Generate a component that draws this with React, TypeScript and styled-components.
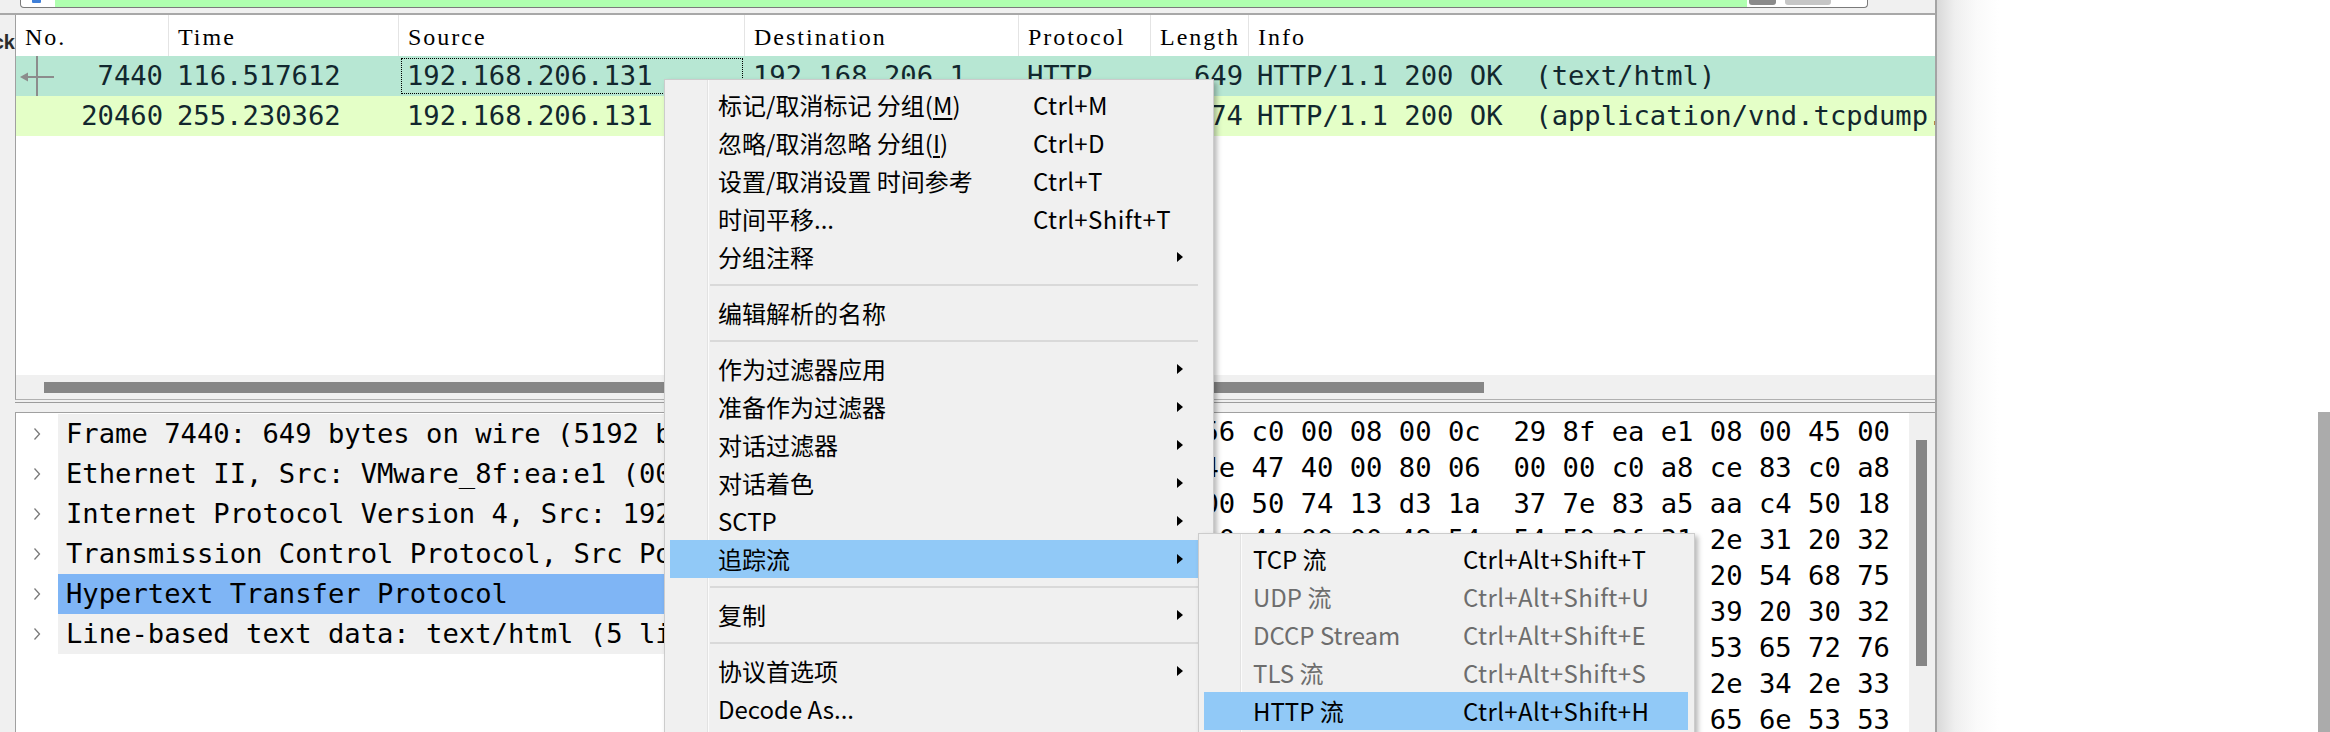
import React from "react";
import styled, { createGlobalStyle } from "styled-components";

const MONO = `"DejaVu Sans Mono", "Liberation Mono", monospace`;
const UI = `"Noto Sans CJK SC", "Noto Sans", sans-serif`;
const HEAD = `"Liberation Serif", "DejaVu Serif", serif`;

const GlobalStyle = createGlobalStyle`
  html, body { margin: 0; padding: 0; background: #ffffff; overflow: hidden; }
  *, *::before, *::after { box-sizing: border-box; }
`;

const Screen = styled.div`
  position: relative;
  width: 2330px;
  height: 732px;
  overflow: hidden;
  display: flex;
  background: #ffffff;
`;

const AppWindow = styled.div`
  flex: none;
  width: 1937px;
  height: 100%;
  display: flex;
  flex-direction: column;
  background: #f0f0f0;
  border-right: 2px solid #a4a4a4;
`;

/* ---------- filter toolbar (only its bottom edge is visible) ---------- */
const FilterBar = styled.div`
  flex: none;
  height: 15px;
  display: flex;
  align-items: flex-start;
  padding: 0 67px 0 20px;
  border-bottom: 2px solid #a8a8a8;
`;

const FilterBox = styled.div`
  flex: 1;
  height: 8px;
  display: flex;
  background: #ffffff;
  border: 1px solid #7a7a7a;
  border-top: none;
  border-radius: 0 0 4px 4px;
  overflow: hidden;
`;

const BookmarkCell = styled.div`
  flex: none;
  width: 34px;
  display: flex;
  justify-content: center;
`;

const BookmarkTail = styled.div`
  width: 9px;
  height: 3px;
  margin-left: -3px;
  background: #3f7fd8;
  border-radius: 0 0 1px 1px;
`;

const FilterField = styled.div`
  flex: 1;
  background: #afffaf;
`;

const FieldButton = styled.div<{ $w: number; $tone: string; $gap: number }>`
  flex: none;
  width: ${(p) => p.$w}px;
  margin-left: ${(p) => p.$gap}px;
  height: 5px;
  background: ${(p) => p.$tone};
  border-radius: 0 0 3px 3px;
`;

const FieldTail = styled.div`
  flex: none;
  width: 36px;
`;

/* ---------- main area ---------- */
const MainArea = styled.div`
  flex: 1;
  min-height: 0;
  display: flex;
`;

const SideStrip = styled.div`
  flex: none;
  width: 15px;
  overflow: hidden;
  display: flex;
  justify-content: flex-end;
  padding-top: 15px;
`;

const SideLabel = styled.span`
  font-family: "Liberation Sans", Arial, sans-serif;
  font-weight: bold;
  font-size: 20px;
  line-height: 24px;
  height: 24px;
  color: #2b2b2b;
  white-space: nowrap;
`;

const Panes = styled.div`
  flex: 1;
  min-width: 0;
  display: flex;
  flex-direction: column;
`;

/* ---------- packet list ---------- */
const COLS = "153px 230px 346px 274px 132px 98px 1fr";

const PacketPane = styled.div`
  flex: none;
  height: 385px;
  display: flex;
  flex-direction: column;
  background: #ffffff;
  border-left: 1px solid #a0a0a0;
  border-bottom: 1px solid #b0b0b0;
`;

const HeaderRow = styled.div`
  flex: none;
  height: 41px;
  display: grid;
  grid-template-columns: ${COLS};
`;

const HeaderCell = styled.div<{ $last?: boolean }>`
  display: flex;
  align-items: center;
  padding: 3px 0 0 9px;
  font-family: ${HEAD};
  font-size: 24px;
  letter-spacing: 2px;
  color: #000000;
  border-right: ${(p) => (p.$last ? "none" : "1px solid #e4e4e4")};
  white-space: nowrap;
  overflow: hidden;
`;

const PacketRow = styled.div<{ $bg: string }>`
  flex: none;
  height: 40px;
  display: grid;
  grid-template-columns: ${COLS};
  background: ${(p) => p.$bg};
  color: #12272e;
  font-family: ${MONO};
  font-size: 27.2px;
  line-height: 40px;
`;

const Cell = styled.div<{ $right?: boolean; $focused?: boolean }>`
  display: flex;
  align-items: center;
  justify-content: ${(p) => (p.$right ? "flex-end" : "flex-start")};
  padding: ${(p) => (p.$right ? "0 6px 0 4px" : "0 8px")};
  white-space: pre;
  overflow: hidden;
  outline: ${(p) => (p.$focused ? "1px dotted #000000" : "none")};
  outline-offset: -3px;
`;

const RelatedMark = styled.svg`
  flex: none;
  align-self: stretch;
  margin-right: auto;
`;

const ListFiller = styled.div`
  flex: 1;
`;

const HScroll = styled.div`
  flex: none;
  height: 24px;
  background: #f0f0f0;
  padding: 7px 0 6px 28px;
`;

const HThumb = styled.div`
  width: 1440px;
  height: 100%;
  background: #868686;
`;

const Splitter = styled.div`
  flex: none;
  height: 12px;
  background: linear-gradient(#f0f0f0 0 2px, #9c9c9c 2px 3px, #f0f0f0 3px);
`;

/* ---------- lower panes ---------- */
const LowerPanes = styled.div`
  flex: 1;
  min-height: 0;
  display: flex;
  border-top: 1px solid #a0a0a0;
`;

const DetailPane = styled.div`
  flex: none;
  width: 976px;
  background: #ffffff;
  border-left: 1px solid #a0a0a0;
  padding-top: 1px;
  overflow: hidden;
`;

const TreeRow = styled.div`
  height: 40px;
  display: flex;
`;

const Twisty = styled.div`
  flex: none;
  width: 42px;
  display: flex;
  align-items: center;
  justify-content: center;
`;

const TreeLabel = styled.div<{ $selected?: boolean }>`
  flex: 1;
  min-width: 0;
  padding-left: 8px;
  background: ${(p) => (p.$selected ? "#7fb5f5" : "#f0f0f0")};
  font-family: ${MONO};
  font-size: 27.2px;
  line-height: 40px;
  color: #000000;
  white-space: pre;
  overflow: hidden;
`;

const PaneGap = styled.div`
  flex: none;
  width: 4px;
  background: #f0f0f0;
`;

const BytesPane = styled.div`
  flex: 1;
  min-width: 0;
  display: flex;
  background: #ffffff;
  border-left: 1px solid #a0a0a0;
`;

const BytesText = styled.div`
  flex: 1;
  min-width: 0;
  padding: 1px 0 0 10px;
  overflow: hidden;
  font-family: ${MONO};
  font-size: 27.2px;
  line-height: 36px;
  color: #000000;
  white-space: pre;
`;

const VScroll = styled.div`
  flex: none;
  width: 26px;
  background: #f0f0f0;
  padding: 27px 0 0 7px;
`;

const VThumb = styled.div`
  width: 11px;
  height: 226px;
  background: #868686;
`;

/* ---------- desktop beside the window ---------- */
const Desktop = styled.div`
  flex: 1;
  display: flex;
  justify-content: flex-end;
  align-items: flex-end;
  background: linear-gradient(to right, #d9d9d9 0px, #efefef 18px, #fafafa 40px, #ffffff 62px);
`;

const EdgeBar = styled.div`
  width: 12px;
  height: 320px;
  background: #ababab;
`;

/* ---------- context menus ---------- */
type MenuEntry =
  | { kind: "sep" }
  | {
      kind: "item";
      label: React.ReactNode;
      shortcut?: string;
      sub?: boolean;
      active?: boolean;
      disabled?: boolean;
    };

type MenuLayout = {
  left: number;
  top: number;
  width: number;
  padRight: number;
  gutter: number;
  labelCol: number;
  labelPad: number;
  arrowCol: number;
};

const PopupMenu = styled.div<{ $l: MenuLayout }>`
  position: absolute;
  left: ${(p) => p.$l.left}px;
  top: ${(p) => p.$l.top}px;
  width: ${(p) => p.$l.width}px;
  padding: 6px ${(p) => p.$l.padRight}px 6px 5px;
  background:
    linear-gradient(
      to right,
      transparent 0 ${(p) => p.$l.gutter + 5}px,
      #e2e2e2 ${(p) => p.$l.gutter + 5}px ${(p) => p.$l.gutter + 6}px,
      #fbfbfb ${(p) => p.$l.gutter + 6}px ${(p) => p.$l.gutter + 7}px,
      transparent ${(p) => p.$l.gutter + 7}px
    ),
    #f0f0f0;
  border: 1px solid #cccccc;
  box-shadow: 3px 3px 5px rgba(0, 0, 0, 0.28);
  font-family: ${UI};
  font-size: 24px;
  color: #000000;
`;

const MenuRow = styled.div<{ $l: MenuLayout; $active?: boolean; $disabled?: boolean }>`
  height: 38px;
  display: grid;
  grid-template-columns: ${(p) => `${p.$l.gutter}px ${p.$l.labelCol}px 1fr ${p.$l.arrowCol}px`};
  align-items: center;
  background: ${(p) => (p.$active ? "#91c9f7" : "transparent")};
  color: ${(p) => (p.$disabled ? "#6d6d6d" : "#000000")};
  white-space: nowrap;
`;

const MenuLabel = styled.span<{ $pad: number }>`
  padding-left: ${(p) => p.$pad}px;
  line-height: 38px;
`;

const MenuShortcut = styled.span`
  line-height: 38px;
  letter-spacing: 0.4px;
`;

const SubArrow = styled.svg`
  margin-left: 7px;
`;

const MenuSep = styled.div<{ $indent: number }>`
  height: 18px;
  display: flex;
  align-items: center;
  padding-left: ${(p) => p.$indent}px;
`;

const SepLine = styled.div`
  flex: 1;
  height: 2px;
  background: #d9d9d9;
`;

const Mnemonic = styled.span`
  text-decoration: underline;
  text-underline-offset: 3px;
`;

function Menu({ layout, entries }: { layout: MenuLayout; entries: MenuEntry[] }) {
  return (
    <PopupMenu $l={layout}>
      {entries.map((e, i) =>
        e.kind === "sep" ? (
          <MenuSep key={i} $indent={layout.gutter + 3}>
            <SepLine />
          </MenuSep>
        ) : (
          <MenuRow key={i} $l={layout} $active={e.active} $disabled={e.disabled}>
            <span />
            <MenuLabel $pad={layout.labelPad}>{e.label}</MenuLabel>
            <MenuShortcut>{e.shortcut ?? ""}</MenuShortcut>
            {e.sub ? (
              <SubArrow width="6" height="10" viewBox="0 0 6 10">
                <polygon points="0,0 6,5 0,10" fill="#000000" />
              </SubArrow>
            ) : (
              <span />
            )}
          </MenuRow>
        )
      )}
    </PopupMenu>
  );
}

const mainLayout: MenuLayout = {
  left: 664,
  top: 79,
  width: 550,
  padRight: 15,
  gutter: 37,
  labelCol: 326,
  labelPad: 11,
  arrowCol: 28,
};

const subLayout: MenuLayout = {
  left: 1198,
  top: 533,
  width: 497,
  padRight: 6,
  gutter: 36,
  labelCol: 223,
  labelPad: 13,
  arrowCol: 0,
};

const mainEntries: MenuEntry[] = [
  {
    kind: "item",
    label: (
      <>
        标记/取消标记 分组(<Mnemonic>M</Mnemonic>)
      </>
    ),
    shortcut: "Ctrl+M",
  },
  {
    kind: "item",
    label: (
      <>
        忽略/取消忽略 分组(<Mnemonic>I</Mnemonic>)
      </>
    ),
    shortcut: "Ctrl+D",
  },
  { kind: "item", label: "设置/取消设置 时间参考", shortcut: "Ctrl+T" },
  { kind: "item", label: "时间平移...", shortcut: "Ctrl+Shift+T" },
  { kind: "item", label: "分组注释", sub: true },
  { kind: "sep" },
  { kind: "item", label: "编辑解析的名称" },
  { kind: "sep" },
  { kind: "item", label: "作为过滤器应用", sub: true },
  { kind: "item", label: "准备作为过滤器", sub: true },
  { kind: "item", label: "对话过滤器", sub: true },
  { kind: "item", label: "对话着色", sub: true },
  { kind: "item", label: "SCTP", sub: true },
  { kind: "item", label: "追踪流", sub: true, active: true },
  { kind: "sep" },
  { kind: "item", label: "复制", sub: true },
  { kind: "sep" },
  { kind: "item", label: "协议首选项", sub: true },
  { kind: "item", label: "Decode As..." },
  { kind: "item", label: "在新窗口显示分组" },
];

const subEntries: MenuEntry[] = [
  { kind: "item", label: "TCP 流", shortcut: "Ctrl+Alt+Shift+T" },
  { kind: "item", label: "UDP 流", shortcut: "Ctrl+Alt+Shift+U", disabled: true },
  { kind: "item", label: "DCCP Stream", shortcut: "Ctrl+Alt+Shift+E", disabled: true },
  { kind: "item", label: "TLS 流", shortcut: "Ctrl+Alt+Shift+S", disabled: true },
  { kind: "item", label: "HTTP 流", shortcut: "Ctrl+Alt+Shift+H", active: true },
  { kind: "item", label: "HTTP/2 Stream", shortcut: "", disabled: true },
];

/* ---------- data ---------- */
type Packet = {
  no: string;
  time: string;
  src: string;
  dst: string;
  proto: string;
  len: string;
  info: string;
  bg: string;
  related?: boolean;
  focused?: boolean;
};

const packets: Packet[] = [
  {
    no: "7440",
    time: "116.517612",
    src: "192.168.206.131",
    dst: "192.168.206.1",
    proto: "HTTP",
    len: "649",
    info: "HTTP/1.1 200 OK  (text/html)",
    bg: "#b7e7d3",
    related: true,
    focused: true,
  },
  {
    no: "20460",
    time: "255.230362",
    src: "192.168.206.131",
    dst: "192.168.206.1",
    proto: "HTTP",
    len: "1374",
    info: "HTTP/1.1 200 OK  (application/vnd.tcpdump.pcap)",
    bg: "#e4ffc7",
  },
];

const headers = ["No.", "Time", "Source", "Destination", "Protocol", "Length", "Info"];

const treeRows = [
  "Frame 7440: 649 bytes on wire (5192 bits), 649 bytes captured (5192 bits) on interface \\Device\\NPF_Loopback, id 0",
  "Ethernet II, Src: VMware_8f:ea:e1 (00:0c:29:8f:ea:e1), Dst: VMware_c0:00:08 (00:50:56:c0:00:08)",
  "Internet Protocol Version 4, Src: 192.168.206.131, Dst: 192.168.206.1",
  "Transmission Control Protocol, Src Port: 80, Dst Port: 54291, Seq: 1, Ack: 1, Len: 595",
  "Hypertext Transfer Protocol",
  "Line-based text data: text/html (5 lines)",
];

const byteLines = [
  "0000  00 50 56 c0 00 08 00 0c  29 8f ea e1 08 00 45 00   .PV.....)....E.",
  "0010  02 7b 4e 47 40 00 80 06  00 00 c0 a8 ce 83 c0 a8   .{NG@...........",
  "0020  ce 01 00 50 74 13 d3 1a  37 7e 83 a5 aa c4 50 18   ...Pt...7~....P.",
  "0030  01 00 a0 44 00 00 48 54  54 50 2f 31 2e 31 20 32   ...D..HTTP/1.1 2",
  "0040  30 30 20 4f 4b 0d 0a 44  61 74 65 3a 20 54 68 75   00 OK..Date: Thu",
  "0050  2c 20 31 34 20 4e 6f 76  20 32 30 31 39 20 30 32   , 14 Nov 2019 02",
  "0060  3a 33 35 3a 30 36 20 47  4d 54 0d 0a 53 65 72 76   :35:06 GMT..Serv",
  "0070  65 72 3a 20 41 70 61 63  68 65 2f 32 2e 34 2e 33   er: Apache/2.4.3",
  "0080  33 20 28 57 69 6e 33 32  29 20 4f 70 65 6e 53 53   3 (Win32) OpenSS",
];

function Chevron() {
  return (
    <svg width="8" height="14" viewBox="0 0 8 14">
      <polyline points="1.5,1.5 6.5,7 1.5,12.5" fill="none" stroke="#7a7a7a" strokeWidth="1.3" />
    </svg>
  );
}

function RelatedArrow() {
  return (
    <RelatedMark width="36" height="40" viewBox="0 0 36 40">
      <line x1="17" y1="0" x2="17" y2="40" stroke="#8c8c8c" strokeWidth="2" />
      <line x1="6" y1="21" x2="34" y2="21" stroke="#8c8c8c" strokeWidth="2" />
      <polygon points="0,21 8,16.5 8,25.5" fill="#8c8c8c" />
    </RelatedMark>
  );
}

export default function App() {
  return (
    <>
      <GlobalStyle />
      <Screen>
        <AppWindow>
          <FilterBar>
            <FilterBox>
              <BookmarkCell>
                <BookmarkTail />
              </BookmarkCell>
              <FilterField />
              <FieldButton $w={27} $tone="#8a8a8a" $gap={2} />
              <FieldButton $w={46} $tone="#c6c6c6" $gap={9} />
              <FieldTail />
            </FilterBox>
          </FilterBar>

          <MainArea>
            <SideStrip>
              <SideLabel>Pack</SideLabel>
            </SideStrip>

            <Panes>
              <PacketPane>
                <HeaderRow>
                  {headers.map((h, i) => (
                    <HeaderCell key={h} $last={i === headers.length - 1}>
                      {h}
                    </HeaderCell>
                  ))}
                </HeaderRow>
                {packets.map((p) => (
                  <PacketRow key={p.no} $bg={p.bg}>
                    <Cell $right>
                      {p.related && <RelatedArrow />}
                      {p.no}
                    </Cell>
                    <Cell>{p.time}</Cell>
                    <Cell $focused={p.focused}>{p.src}</Cell>
                    <Cell>{p.dst}</Cell>
                    <Cell>{p.proto}</Cell>
                    <Cell $right>{p.len}</Cell>
                    <Cell>{p.info}</Cell>
                  </PacketRow>
                ))}
                <ListFiller />
                <HScroll>
                  <HThumb />
                </HScroll>
              </PacketPane>

              <Splitter />

              <LowerPanes>
                <DetailPane>
                  {treeRows.map((t, i) => (
                    <TreeRow key={i}>
                      <Twisty>
                        <Chevron />
                      </Twisty>
                      <TreeLabel $selected={i === 4}>{t}</TreeLabel>
                    </TreeRow>
                  ))}
                </DetailPane>
                <PaneGap />
                <BytesPane>
                  <BytesText>
                    {byteLines.map((l) => (
                      <div key={l}>{l}</div>
                    ))}
                  </BytesText>
                  <VScroll>
                    <VThumb />
                  </VScroll>
                </BytesPane>
              </LowerPanes>
            </Panes>
          </MainArea>
        </AppWindow>

        <Desktop>
          <EdgeBar />
        </Desktop>

        <Menu layout={mainLayout} entries={mainEntries} />
        <Menu layout={subLayout} entries={subEntries} />
      </Screen>
    </>
  );
}
